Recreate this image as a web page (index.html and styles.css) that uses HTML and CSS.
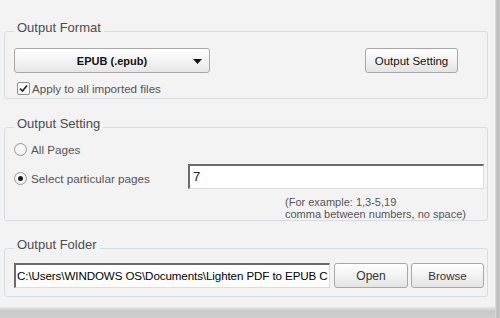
FILE: index.html
```html
<!DOCTYPE html>
<html>
<head>
<meta charset="utf-8">
<link rel="stylesheet" href="styles.css">
</head>
<body>
<div class="window">
  <div class="content">
    <section class="group g-format">
      <div class="group-title">Output Format</div>
      <div class="row row-format">
        <div class="select">
          <span class="select-text">EPUB (.epub)</span>
          <svg class="select-arrow" width="9" height="5" viewBox="0 0 9 5"><polygon points="0,0 9,0 4.5,5" fill="#111"/></svg>
        </div>
        <button class="btn btn-setting">Output Setting</button>
      </div>
      <label class="check">
        <span class="check-box"><svg width="11" height="11" viewBox="0 0 11 11"><polyline points="2,5.5 4.5,8 9,2.5" fill="none" stroke="#222" stroke-width="1.6"/></svg></span>
        <span class="check-text">Apply to all imported files</span>
      </label>
    </section>

    <section class="group g-setting">
      <div class="group-title">Output Setting</div>
      <label class="radio-row">
        <span class="radio"></span>
        <span class="radio-text">All Pages</span>
      </label>
      <div class="row row-pages">
        <label class="radio-row radio-pages">
          <span class="radio radio-on"><span class="radio-dot"></span></span>
          <span class="radio-text">Select particular pages</span>
        </label>
        <div class="textbox textbox-pages">7</div>
      </div>
      <div class="hint">(For example: 1,3-5,19<br>comma between numbers, no space)</div>
    </section>

    <section class="group g-folder">
      <div class="group-title">Output Folder</div>
      <div class="row row-folder">
        <div class="textbox textbox-path">C:\Users\WINDOWS OS\Documents\Lighten PDF to EPUB C</div>
        <button class="btn btn-open">Open</button>
        <button class="btn btn-browse">Browse</button>
      </div>
    </section>
  </div>
  <div class="edge-right"></div>
  <div class="edge-bottom"></div>
</div>
</body>
</html>
```

FILE: styles.css
```css
* { box-sizing: border-box; }
html, body { margin: 0; padding: 0; }
body {
  width: 500px;
  height: 318px;
  overflow: hidden;
  background: #f3f3f3;
  font-family: "Liberation Sans", Arial, sans-serif;
  font-size: 12px;
  color: #333;
}
.window {
  display: grid;
  grid-template-columns: 495px 5px;
  grid-template-rows: 307px 11px;
  height: 318px;
}
.content { padding: 31px 0 0 4px; }
.edge-right {
  grid-column: 2;
  grid-row: 1 / 3;
  background: linear-gradient(to right, #e2e2e2, #bdbdbd 40%, #c6c6c6);
}
.edge-bottom {
  grid-column: 1;
  grid-row: 2;
  background: linear-gradient(#e6e6e6, #c9c9c9 40%, #cfcfcf);
}

.group {
  position: relative;
  width: 484px;
  border: 1px solid #d4dde2;
  border-radius: 3px;
}
.group-title {
  position: absolute;
  top: -12px;
  left: 9px;
  padding: 0 3px;
  background: #f3f3f3;
  font-size: 13px;
  line-height: 16px;
  color: #4d4d4d;
}
.g-format { height: 68px; padding: 16px 0 0 9px; }
.g-setting { height: 94px; margin-top: 28px; padding: 15px 3px 0 9px; }
.g-folder { height: 49px; margin-top: 27px; padding: 14px 3px 0 9px; }

.row { display: flex; align-items: flex-start; }
.row-format { padding-right: 29px; justify-content: space-between; }

.select {
  position: relative;
  width: 196px;
  height: 25px;
  border: 1px solid #a8a8a8;
  border-radius: 3px;
  background: linear-gradient(#ffffff, #f6f6f6 45%, #e6e6e6);
  display: flex;
  align-items: center;
  justify-content: center;
}
.select-text { font-weight: bold; font-size: 11px; color: #111; }
.select-arrow { position: absolute; right: 7px; top: 10px; }

.btn {
  height: 25px;
  border: 1px solid #a8a8a8;
  border-radius: 3px;
  background: linear-gradient(#ffffff, #f4f4f4 45%, #e4e4e4);
  font-family: "Liberation Sans", Arial, sans-serif;
  font-size: 12px;
  color: #222;
  padding: 0;
  margin: 0;
}
.btn-setting { width: 93px; font-size: 11.5px; color: #111; }
.btn-open { width: 74px; margin-left: 4px; color: #333; }
.btn-browse { width: 73px; margin-left: 3px; color: #333; font-size: 11.5px; }

.check {
  display: flex;
  align-items: center;
  margin: 9px 0 0 3px;
  height: 13px;
}
.check-box {
  width: 13px;
  height: 13px;
  border: 1px solid #8e8f8f;
  border-radius: 2px;
  background: linear-gradient(#f6f6f6, #ffffff);
  display: flex;
  align-items: center;
  justify-content: center;
}
.check-text { margin-left: 2px; color: #555; font-size: 11.6px; }

.radio-row { display: flex; align-items: center; height: 13px; }
.radio {
  width: 13px;
  height: 13px;
  border: 1px solid #9a9a9a;
  border-radius: 50%;
  background: radial-gradient(circle at 50% 40%, #ffffff, #e9e9e9);
  display: flex;
  align-items: center;
  justify-content: center;
}
.radio-dot {
  width: 5px;
  height: 5px;
  border-radius: 50%;
  background: #1a1a1a;
}
.radio-text { margin-left: 4px; color: #555; font-size: 11.7px; }
.row-pages { margin-top: 8px; }
.radio-pages { margin-top: 8px; }

.textbox {
  height: 25px;
  background: #fff;
  border: 1px solid #dcdcdc;
  border-top: 2px solid #6b6b6b;
  border-left: 2px solid #6b6b6b;
  font-size: 12px;
  line-height: 21px;
  color: #000;
  white-space: nowrap;
  overflow: hidden;
}
.textbox-pages { width: 296px; margin-left: auto; padding-left: 3px; font-size: 13px; color: #102040; }
.textbox-path { width: 316px; padding-left: 1px; font-size: 11.6px; letter-spacing: -0.1px; }

.hint {
  margin: 7px 0 0 271px;
  font-size: 11px;
  line-height: 12px;
  color: #555;
}
```
